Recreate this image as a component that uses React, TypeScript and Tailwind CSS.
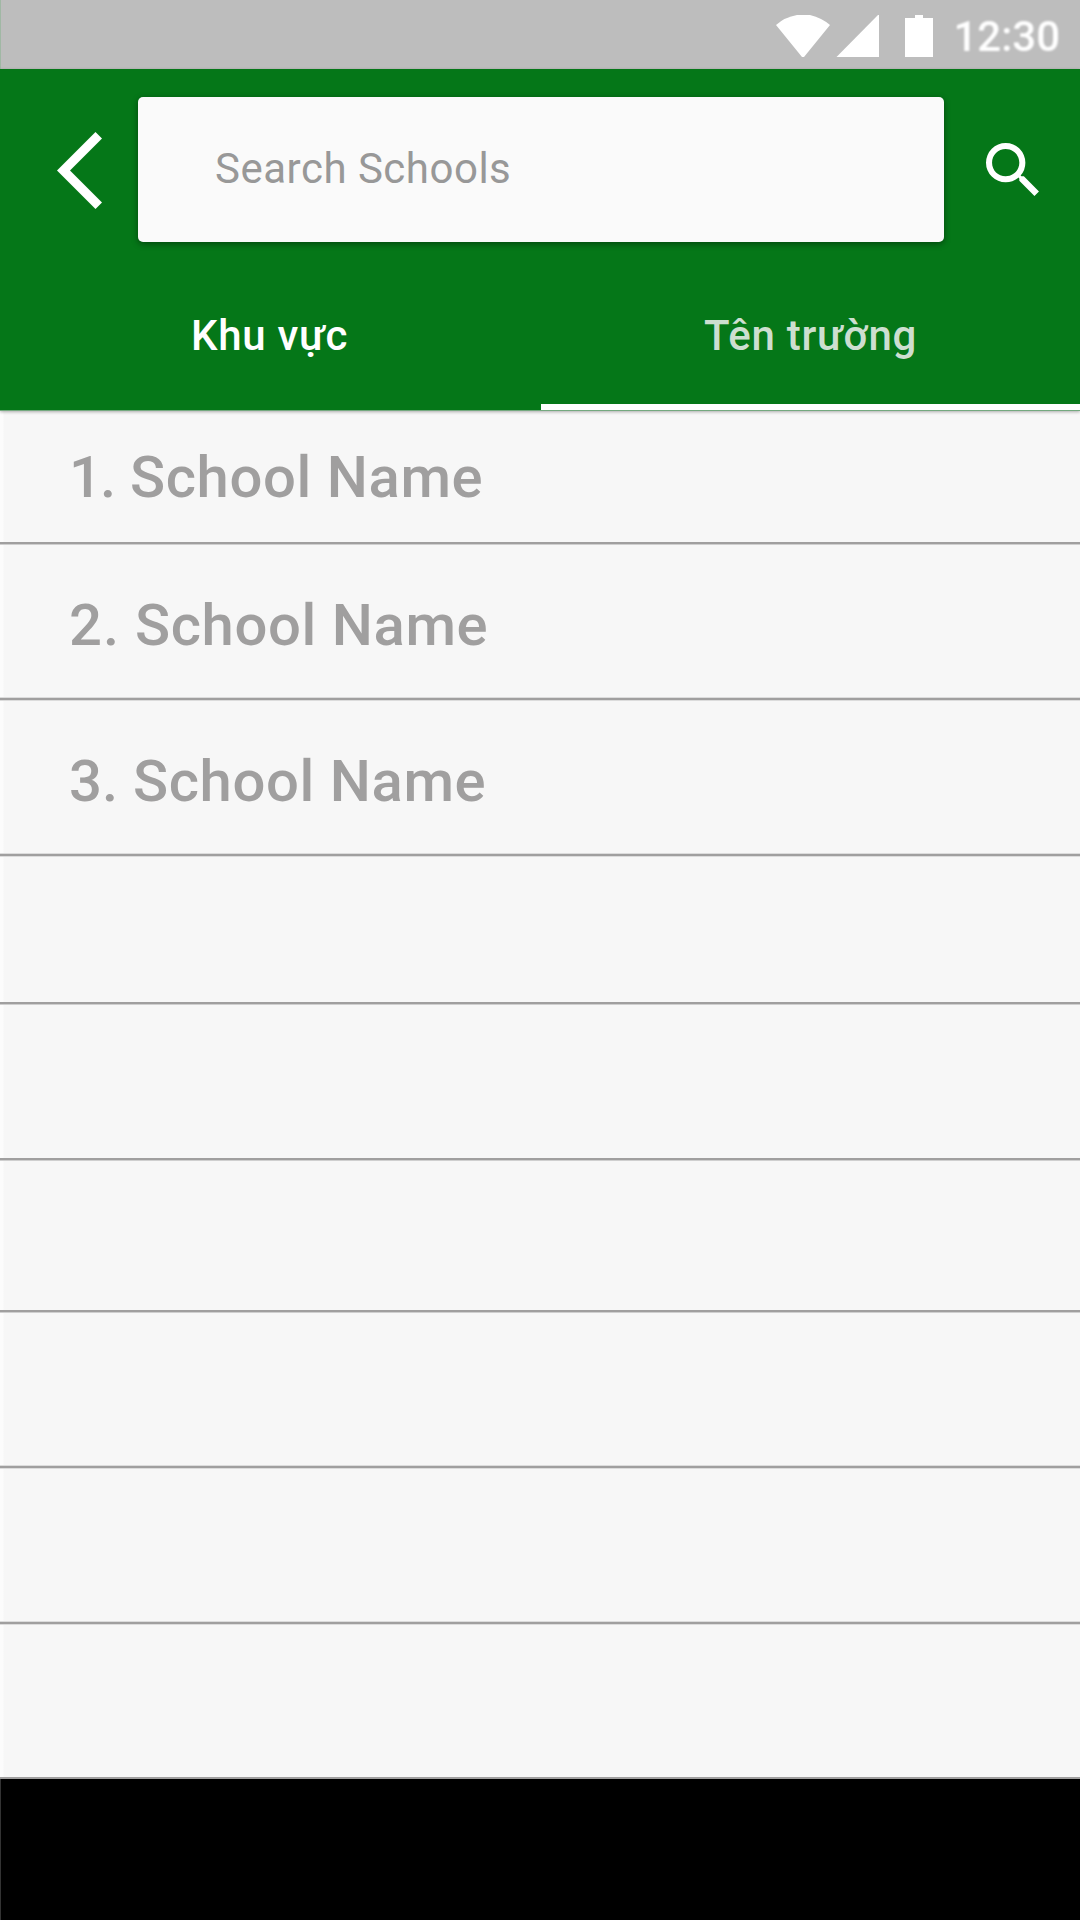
const rows = [
  { box: 'h-[133px] pt-[2px]', num: '1', numStyle: 'w-[31px]', dotStyle: 'w-[30px]' },
  {
    box: 'h-[156px] pt-[8px] shadow-[inset_0_1px_0_#cfcfcf,inset_0_-1px_0_#dcdcdc]',
    num: '2',
    numStyle: 'w-[34px]',
    dotStyle: 'w-[32px]',
  },
  {
    box: 'h-[156px] pt-[8px] shadow-[inset_0_1px_0_#dcdcdc,inset_0_-1px_0_#dcdcdc]',
    num: '3',
    numStyle: 'w-[33px]',
    dotStyle: 'w-[31px]',
  },
  { box: 'h-[148px] shadow-[inset_0_1px_0_#dcdcdc]' },
  { box: 'h-[156px] shadow-[inset_0_1px_0_#cfcfcf]' },
  { box: 'h-[152px] shadow-[inset_0_1px_0_#cfcfcf]' },
  { box: 'h-[156px] shadow-[inset_0_1px_0_#cfcfcf,inset_0_-1px_0_#dcdcdc]' },
  { box: 'h-[156px] shadow-[inset_0_1px_0_#dcdcdc,inset_0_-1px_0_#dcdcdc]' },
  { box: 'h-[155px] shadow-[inset_0_1px_0_#dcdcdc]' },
];

function StatusBar() {
  return (
    <div className="flex h-[69px] shrink-0 items-center justify-end border-l border-[#a0b8a4] bg-[#bdbdbd] pr-5 text-white">
      <svg className="h-[69px] w-[180px] blur-[0.5px]" viewBox="-3 0 180 69" fill="currentColor">
        <path d="M0 25Q9 17 21 15H34Q46 18 54 25L28 57H26Z" />
        <path d="M60.5 57L102 15H103V57Z" />
        <path d="M129 18h10v-3h8v3h10v39h-28z" />
      </svg>
      <span className="pt-1 text-[42px] font-medium blur-[0.9px]">12:30</span>
    </div>
  );
}

function Header() {
  return (
    <header className="z-10 flex h-[342px] shrink-0 flex-col border-b border-[#74a97f] bg-[#057718] text-white shadow-[0_1px_3px_rgba(0,0,0,0.3)]">
      <div className="flex h-[201px] items-center">
        <svg className="ml-[56px] h-[81px] w-[48px]" viewBox="0 0 48 81" fill="currentColor">
          <path d="M1 41.5L39.5 3L46 9.5L14 41.5L46 73.5L39.5 80Z" />
        </svg>
        <div className="ml-[34px] flex h-[145px] w-[806px] items-center rounded-[5px] bg-[#fafafa] pb-[2px] pl-[77px] text-[42px] tracking-[0.5px] text-[#989898] shadow-[0_2px_6px_rgba(0,0,0,0.4)]">
          Search Schools
        </div>
        <svg className="ml-[42px] h-[53px] w-[53px]" viewBox="3 3 17.5 17.5" fill="currentColor">
          <path d="M15.5 14h-.79l-.28-.27A6.47 6.47 0 0 0 16 9.5 6.5 6.5 0 1 0 9.5 16c1.61 0 3.09-.59 4.23-1.57l.27.28v.79l5 4.99L20.49 19l-4.99-5zm-6 0C7.01 14 5 11.99 5 9.5S7.01 5 9.5 5 14 7.01 14 9.5 11.99 14 9.5 14z" />
        </svg>
      </div>
      <div className="flex flex-1 text-center text-[42px] font-medium tracking-[0.72px]">
        <div className="w-[541px] pt-[34px] pr-[2px]">Khu vực</div>
        <div className="flex-1 border-b-[6px] border-white pt-[34px] text-[#cddfd0]">Tên trường</div>
      </div>
    </header>
  );
}

export default function App() {
  return (
    <div className="flex h-[1920px] w-[1080px] flex-col overflow-hidden bg-[#f7f7f7] font-['Roboto',sans-serif]">
      <StatusBar />
      <Header />
      {rows.map((row, i) => (
        <div
          key={i}
          className={`${row.box} flex shrink-0 items-center border-b-2 border-[#a09f9f] bg-[linear-gradient(to_right,#fcfcfc_3px,#f7f7f7_4px)] pl-[69px] text-[58px] font-medium tracking-[0.6px] text-[#a09f9f]`}
        >
          {row.num && (
            <>
              <span className={row.numStyle}>{row.num}</span>
              <span className={row.dotStyle}>.</span>
              <span>School Name</span>
            </>
          )}
        </div>
      ))}
      <div className="flex-1 border-l border-[#333333] bg-black" />
    </div>
  );
}
